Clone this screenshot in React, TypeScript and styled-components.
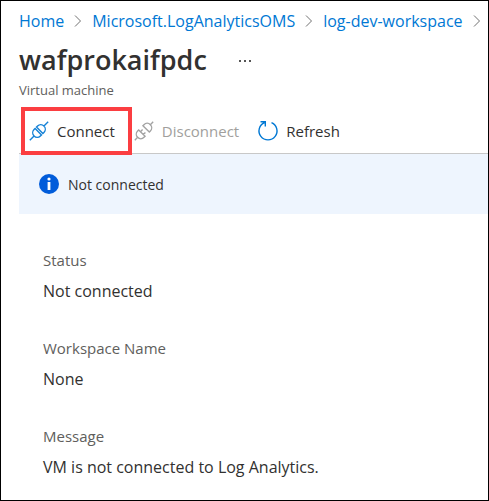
import React from "react";
import styled, { createGlobalStyle } from "styled-components";

const GlobalStyle = createGlobalStyle`
  *, *::before, *::after { box-sizing: border-box; }
  body {
    margin: 0;
    background: #fff;
    color: #323130;
    font-family: "Open Sans", "Noto Sans", sans-serif;
  }
`;

const Page = styled.main`
  min-height: 100vh;
  border: 1px solid #000;
  overflow: hidden;
`;

const Header = styled.header`
  padding: 8px 0 0 18px;
`;

const Breadcrumb = styled.nav`
  display: flex;
  align-items: center;
  gap: 10px;
  height: 24px;
  font-size: 16px;
  white-space: nowrap;
`;

const Crumb = styled.a`
  color: #0078d4;
  text-decoration: none;
`;

const Chevron = styled.svg`
  flex: none;
  width: 8px;
  height: 12px;
  fill: none;
  stroke: #707070;
`;

const TitleRow = styled.div`
  display: flex;
  align-items: center;
  gap: 30px;
  height: 36px;
  margin-top: 9px;
`;

const Title = styled.h1`
  margin: 0;
  font-size: 27px;
  line-height: 36px;
  font-weight: 600;
`;

const MoreButton = styled.button`
  display: flex;
  padding: 0;
  border: 0;
  background: none;
  cursor: pointer;
`;

const Subtitle = styled.p`
  margin: 2px 0 0;
  color: #605e5c;
  font-size: 13px;
  line-height: 20px;
`;

const Toolbar = styled.div`
  display: flex;
  align-items: center;
  gap: 18px;
  height: 54px;
  margin-left: 18px;
  padding: 8px 0 0 9px;
  border-bottom: 1px solid #c8c8c8;
`;

const Command = styled.button<{ $highlighted?: boolean }>`
  position: relative;
  display: flex;
  align-items: center;
  gap: 7px;
  height: 24px;
  padding: 0;
  border: 0;
  background: none;
  color: #323130;
  font: inherit;
  font-size: 15px;
  cursor: pointer;

  &:disabled {
    color: #a19f9d;
    cursor: default;
  }

  &::after {
    content: "";
    display: ${(p) => (p.$highlighted ? "block" : "none")};
    position: absolute;
    inset: -12px -17px -12px -7px;
    border: 4px solid #fb3e41;
  }
`;

const Icon = styled.svg`
  flex: none;
  width: 22px;
  height: 22px;
`;

const Banner = styled.div`
  display: flex;
  align-items: center;
  gap: 8px;
  height: 60px;
  margin-left: 18px;
  padding-left: 19px;
  background: #eef5fe;
  font-size: 14px;
`;

const Details = styled.dl`
  display: grid;
  gap: 33px;
  margin: 0;
  padding: 34px 16px 20px 42px;
`;

const Label = styled.dt`
  color: #605e5c;
  font-size: 15px;
  line-height: 24px;
`;

const Value = styled.dd`
  margin: 7px 0 0;
  font-size: 16px;
  line-height: 24px;
`;

const crumbs = ["Home", "Microsoft.LogAnalyticsOMS", "log-dev-workspace"];

const details = [
  { label: "Status", value: "Not connected" },
  { label: "Workspace Name", value: "None" },
  { label: "Message", value: "VM is not connected to Log Analytics." },
];

const ConnectIcon = () => (
  <Icon viewBox="0 0 22 22" fill="none" stroke="#1481d6" strokeWidth="1.4" aria-hidden="true">
    <g transform="rotate(-45 11 11)">
      <path d="M-2 11H4M18 11H24M10 6.5H8.5a4.5 4.5 0 0 0 0 9H10ZM12 6.5h1.5a4.5 4.5 0 0 1 0 9H12Z" />
    </g>
  </Icon>
);

const DisconnectIcon = () => (
  <Icon viewBox="0 0 22 22" fill="none" stroke="#a3a3a3" strokeWidth="1.4" aria-hidden="true">
    <g transform="rotate(-45 11 11)">
      <path d="M-2 11H2M20 11H24M8 6.5H6.5a4.5 4.5 0 0 0 0 9H8ZM14 6.5h1.5a4.5 4.5 0 0 1 0 9H14ZM8 9h3M8 13h3" />
    </g>
  </Icon>
);

const RefreshIcon = () => (
  <Icon viewBox="0 0 22 22" fill="none" stroke="#0078d4" strokeWidth="1.4" aria-hidden="true">
    <path d="M14.5 2.6A9 9 0 1 1 7.5 2.6M3.5 1.7H8.3V6.5" />
  </Icon>
);

export default function App() {
  return (
    <>
      <GlobalStyle />
      <Page>
        <Header>
          <Breadcrumb aria-label="Breadcrumb">
            {crumbs.map((name) => (
              <React.Fragment key={name}>
                <Crumb href="#">{name}</Crumb>
                <Chevron viewBox="0 0 8 12" aria-hidden="true">
                  <path d="M1 .5 6.5 6 1 11.5" />
                </Chevron>
              </React.Fragment>
            ))}
          </Breadcrumb>
          <TitleRow>
            <Title>wafprokaifpdc</Title>
            <MoreButton type="button" aria-label="More actions">
              <svg width="16" height="8" viewBox="0 0 16 8" fill="#555" aria-hidden="true">
                <path d="M2 4h2v2H2zM7 4h2v2H7zM12 4h2v2h-2z" />
              </svg>
            </MoreButton>
          </TitleRow>
          <Subtitle>Virtual machine</Subtitle>
        </Header>
        <Toolbar role="toolbar" aria-label="Commands">
          <Command type="button" $highlighted>
            <ConnectIcon />
            Connect
          </Command>
          <Command type="button" disabled>
            <DisconnectIcon />
            Disconnect
          </Command>
          <Command type="button">
            <RefreshIcon />
            Refresh
          </Command>
        </Toolbar>
        <Banner role="status">
          <Icon viewBox="0 0 22 22" aria-hidden="true">
            <circle cx="11" cy="11" r="10" fill="#015cda" />
            <circle cx="11" cy="6" r="1.6" fill="#fff" />
            <path d="M9.6 9h2.8v8H9.6z" fill="#fff" />
          </Icon>
          Not connected
        </Banner>
        <Details>
          {details.map(({ label, value }) => (
            <div key={label}>
              <Label>{label}</Label>
              <Value>{value}</Value>
            </div>
          ))}
        </Details>
      </Page>
    </>
  );
}
